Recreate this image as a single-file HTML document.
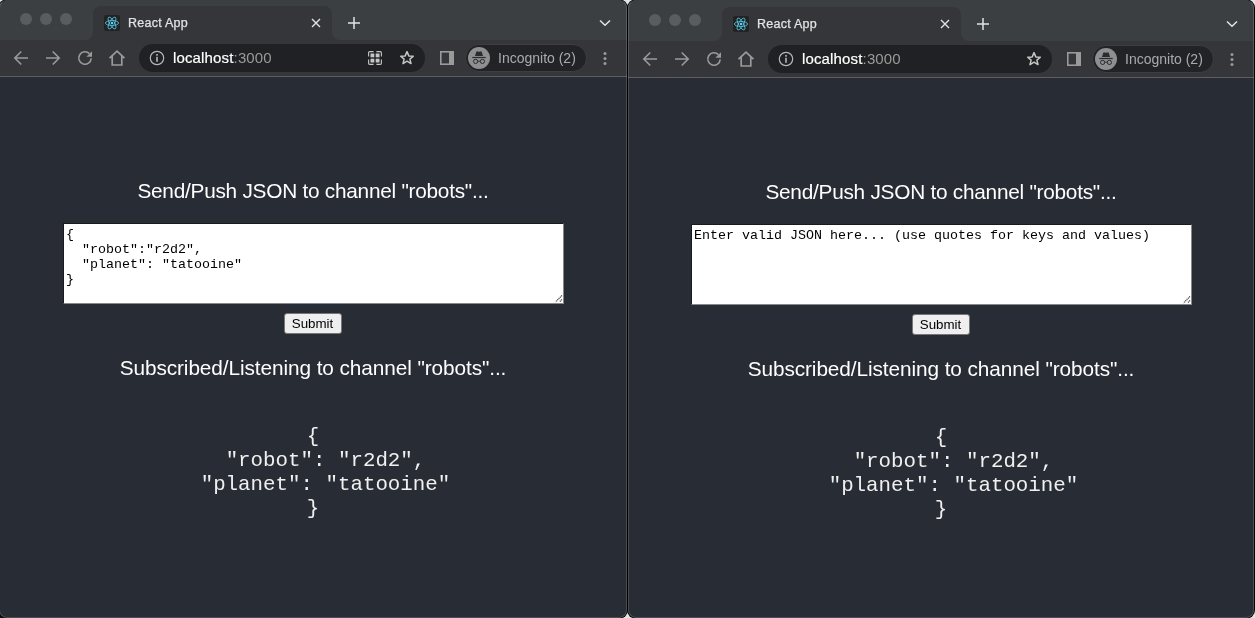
<!DOCTYPE html>
<html><head><meta charset="utf-8"><title>React App</title><style>
*{box-sizing:border-box}
html,body{margin:0;padding:0}
body{width:1255px;height:618px;overflow:hidden;position:relative;background:#e4e4e4;font-family:"Liberation Sans",sans-serif}
.win{position:absolute;overflow:hidden;border-radius:8px;box-shadow:0 0 0 1px #000;background:#35363a;will-change:transform}
.strip{position:absolute;left:0;right:0;background:#3c3f42}
.in{position:absolute;left:0;right:0;bottom:0}
.edge{position:absolute;left:0;top:0;right:0;bottom:0;border-radius:8px;border:1px solid rgba(255,255,255,0.16);border-top-color:transparent;pointer-events:none}
.dot{position:absolute;top:13px;width:12px;height:12px;border-radius:50%;background:#5a5d60}
.tab{position:absolute;top:6px;height:34px;background:#35363a;border-radius:8px 8px 0 0}
.footl,.footr{position:absolute;bottom:0;width:8px;height:8px;overflow:hidden}
.footl{left:-8px}.footr{right:-8px}
.footl:before,.footr:before{content:"";position:absolute;width:16px;height:16px;border-radius:50%;box-shadow:0 0 0 10px #35363a}
.footl:before{left:-8px;top:-8px}.footr:before{left:0;top:-8px}
.ic{position:absolute}
.tabtitle{position:absolute;top:15px;font-size:12.5px;letter-spacing:0.25px;-webkit-text-stroke:0.25px #e3e3e3;line-height:16px;color:#e3e3e3}
.toolbar{position:absolute;left:0;right:0;top:40px;height:36px;background:#35363a}
.sep{position:absolute;left:0;right:0;top:76px;height:1px;background:#5d5e61}
.url{position:absolute;top:44px;height:28px;border-radius:14px;background:#202124}
.host{position:absolute;top:50px;font-size:15px;letter-spacing:0.15px;-webkit-text-stroke:0.2px #fff;line-height:16px;color:#fff}
.host span{color:#9a9a9a;-webkit-text-stroke:0}
.chip{position:absolute;top:44px;width:122px;height:28px;border-radius:14px;background:#222326;border:1px solid #3d3e42}
.inc{position:absolute;top:50px;font-size:14px;line-height:16px;color:#a8abae}
.content{position:absolute;left:0;right:0;top:77px;bottom:0;background:#282c34;color:#fff}
.h1{position:absolute;left:0;right:0;text-align:center;font-size:20.8px;line-height:24px;white-space:nowrap}
.ta{position:absolute;width:501px;height:81px;background:#fff;border:1px solid #1a1a1a;border-right-color:#888;border-bottom-color:#888}
.ta pre{margin:0;padding:3px 0 0 2.5px;font-family:"Liberation Mono",monospace;font-size:13.33px;line-height:15px;color:#000}
.btn{position:absolute;width:58px;height:21px;background:#efefef;border:1px solid #767676;border-radius:3px;color:#000;font-size:13.33px;line-height:19px;text-align:center}
.out{position:absolute;left:0;right:0;margin:0;text-align:center;font-family:"Liberation Mono",monospace;font-size:20.8px;line-height:24px;color:#f0f0f0}
</style></head>
<body>
<div style="position:absolute;left:0;top:606px;width:12px;height:12px;background:#141414"></div>

<div class="win" style="left:-1px;top:0px;width:628px;height:618px">
  <div class="strip" style="top:0;height:40px"></div>
  <div class="in" style="top:0px">
  <div class="dot" style="left:21px"></div><div class="dot" style="left:41px"></div><div class="dot" style="left:61px"></div>
  <div class="tab" style="left:94px;width:239px">
    <div class="footl"></div><div class="footr"></div>
  </div>
  <svg class="ic" style="left:105px;top:15px" width="16" height="16" viewBox="0 0 16 16"><rect width="16" height="16" rx="2" fill="#232323"/><g fill="none" stroke="#55bfe0" stroke-width="0.85"><ellipse cx="8" cy="8" rx="6.6" ry="2.5"/><ellipse cx="8" cy="8" rx="6.6" ry="2.5" transform="rotate(60 8 8)"/><ellipse cx="8" cy="8" rx="6.6" ry="2.5" transform="rotate(120 8 8)"/></g><circle cx="8" cy="8" r="1.3" fill="#5fd3f5"/></svg>
  <div class="tabtitle" style="left:129px">React App</div>
  <svg class="ic" style="left:312px;top:18px" width="10" height="10" viewBox="0 0 10 10"><path d="M1 1L9 9M9 1L1 9" stroke="#e3e3e3" stroke-width="1.4"/></svg>
  <svg class="ic" style="left:348px;top:16px" width="14" height="14" viewBox="0 0 14 14"><path d="M7 1V13M1 7H13" stroke="#e3e3e3" stroke-width="1.5"/></svg>
  <svg class="ic" style="left:600px;top:19px" width="12" height="8" viewBox="0 0 12 8"><path d="M1 1.5L6 6.3L11 1.5" fill="none" stroke="#e3e3e3" stroke-width="1.5"/></svg>
  <div class="toolbar"></div>
  <div class="sep"></div>
  <svg class="ic" style="left:14px;top:50px" width="16" height="16" viewBox="0 0 16 16"><path d="M15 8H2.2M8.3 1.5L1.8 8L8.3 14.5" fill="none" stroke="#9a9a9a" stroke-width="1.6"/></svg>
  <svg class="ic" style="left:46px;top:50px" width="16" height="16" viewBox="0 0 16 16"><path d="M1 8H13.8M7.7 1.5L14.2 8L7.7 14.5" fill="none" stroke="#9a9a9a" stroke-width="1.6"/></svg>
  <svg class="ic" style="left:78px;top:50px" width="16" height="16" viewBox="0 0 16 16"><path d="M14.2 8.4A6.2 6.2 0 1 1 12.4 3.6" fill="none" stroke="#9a9a9a" stroke-width="1.6"/><path d="M15 1.2V6.8H9.4Z" fill="#9a9a9a"/></svg>
  <svg class="ic" style="left:109px;top:49px" width="18" height="18" viewBox="0 0 18 18"><path d="M1.5 9.2L9 2.2L16.5 9.2M4.2 7.2V16H13.8V7.2" fill="none" stroke="#9a9a9a" stroke-width="1.7"/></svg>
  <div class="url" style="left:140px;width:286px"></div>
  <svg class="ic" style="left:150px;top:50px" width="16" height="16" viewBox="0 0 16 16"><circle cx="8" cy="8" r="6.7" fill="none" stroke="#b4b7b9" stroke-width="1.2"/><rect x="7.2" y="6.8" width="1.6" height="5" fill="#b4b7b9"/><rect x="7.2" y="4" width="1.6" height="1.7" fill="#b4b7b9"/></svg>
  <div class="host" style="left:174px">localhost<span>:3000</span></div>
  <svg class="ic" style="left:369px;top:51px" width="14" height="14" viewBox="0 0 14 14"><path d="M0.6 5.6V1.8Q0.6 0.6 1.8 0.6H5.6M8.4 0.6H12.2Q13.4 0.6 13.4 1.8V5.6M13.4 8.4V12.2Q13.4 13.4 12.2 13.4H8.4M5.6 13.4H1.8Q0.6 13.4 0.6 12.2V8.4" fill="none" stroke="#c4c7c5" stroke-width="1.1"/><rect x="2.5" y="2.5" width="3.8" height="3.8" fill="#c4c7c5"/><rect x="7.7" y="2.5" width="3.8" height="3.8" fill="#c4c7c5"/><rect x="2.5" y="7.7" width="3.8" height="3.8" fill="#c4c7c5"/><rect x="7.7" y="7.7" width="3.8" height="3.8" fill="#c4c7c5"/></svg>
  <svg class="ic" style="left:400px;top:50px" width="16" height="16" viewBox="0 0 16 16"><path d="M8 1.6L9.8 5.9L14.3 6.2L10.9 9.1L12 13.6L8 11.2L4 13.6L5.1 9.1L1.7 6.2L6.2 5.9Z" fill="none" stroke="#c4c7c5" stroke-width="1.5" stroke-linejoin="round"/></svg>
  <svg class="ic" style="left:441px;top:51px" width="14" height="14" viewBox="0 0 14 14"><rect x="0" y="0" width="14" height="14" fill="#9a9a9a"/><rect x="1.6" y="1.6" width="7.4" height="10.8" fill="#35363a"/></svg>
  <div class="chip" style="left:466px"></div>
  <svg class="ic" style="left:469px;top:47px" width="22" height="22" viewBox="0 0 22 22"><circle cx="11" cy="11" r="11" fill="#8e8f91"/><path d="M7 9L8.2 4.9Q8.6 4.2 9.5 4.4L11 4.8L12.5 4.4Q13.4 4.2 13.8 4.9L15 9Z" fill="#2b2c2f"/><rect x="4.3" y="9.9" width="13.4" height="1.2" fill="#2b2c2f"/><circle cx="7.6" cy="14.4" r="2.1" fill="none" stroke="#2b2c2f" stroke-width="1"/><circle cx="14.4" cy="14.4" r="2.1" fill="none" stroke="#2b2c2f" stroke-width="1"/><path d="M9.7 14.2H12.3" stroke="#2b2c2f" stroke-width="0.9"/></svg>
  <div class="inc" style="left:499px">Incognito (2)</div>
  <svg class="ic" style="left:604px;top:51px" width="4" height="15" viewBox="0 0 4 15"><circle cx="2" cy="2.5" r="1.5" fill="#9a9a9a"/><circle cx="2" cy="7.5" r="1.5" fill="#9a9a9a"/><circle cx="2" cy="12.5" r="1.5" fill="#9a9a9a"/></svg>
  <div class="content">
    <div class="h1" style="top:102px;letter-spacing:-0.25px">Send/Push JSON to channel "robots"...</div>
    <div class="ta" style="left:63.5px;top:146px"><pre>{
  "robot":"r2d2",
  "planet": "tatooine"
}</pre><svg style="position:absolute;right:0px;bottom:0px" width="9" height="9" viewBox="0 0 9 9"><path d="M8 1.5L1.5 8M8 5.5L5.5 8" stroke="#444" stroke-width="1.3" stroke-dasharray="1.1 0.7"/></svg></div>
    <div class="btn" style="left:284.5px;top:236px">Submit</div>
    <div class="h1" style="top:279px;letter-spacing:-0.09px">Subscribed/Listening to channel "robots"...</div>
    <pre class="out" style="top:348px">{
  "robot": "r2d2",
  "planet": "tatooine"
}</pre>
  </div>
  </div>
  <div class="edge"></div>
</div>

<div class="win" style="left:628px;top:0px;width:626px;height:618px">
  <div class="strip" style="top:0;height:41px"></div>
  <div class="in" style="top:1px">
  <div class="dot" style="left:21px"></div><div class="dot" style="left:41px"></div><div class="dot" style="left:61px"></div>
  <div class="tab" style="left:94px;width:239px">
    <div class="footl"></div><div class="footr"></div>
  </div>
  <svg class="ic" style="left:105px;top:15px" width="16" height="16" viewBox="0 0 16 16"><rect width="16" height="16" rx="2" fill="#232323"/><g fill="none" stroke="#55bfe0" stroke-width="0.85"><ellipse cx="8" cy="8" rx="6.6" ry="2.5"/><ellipse cx="8" cy="8" rx="6.6" ry="2.5" transform="rotate(60 8 8)"/><ellipse cx="8" cy="8" rx="6.6" ry="2.5" transform="rotate(120 8 8)"/></g><circle cx="8" cy="8" r="1.3" fill="#5fd3f5"/></svg>
  <div class="tabtitle" style="left:129px">React App</div>
  <svg class="ic" style="left:312px;top:18px" width="10" height="10" viewBox="0 0 10 10"><path d="M1 1L9 9M9 1L1 9" stroke="#e3e3e3" stroke-width="1.4"/></svg>
  <svg class="ic" style="left:348px;top:16px" width="14" height="14" viewBox="0 0 14 14"><path d="M7 1V13M1 7H13" stroke="#e3e3e3" stroke-width="1.5"/></svg>
  <svg class="ic" style="left:598px;top:19px" width="12" height="8" viewBox="0 0 12 8"><path d="M1 1.5L6 6.3L11 1.5" fill="none" stroke="#e3e3e3" stroke-width="1.5"/></svg>
  <div class="toolbar"></div>
  <div class="sep"></div>
  <svg class="ic" style="left:14px;top:50px" width="16" height="16" viewBox="0 0 16 16"><path d="M15 8H2.2M8.3 1.5L1.8 8L8.3 14.5" fill="none" stroke="#9a9a9a" stroke-width="1.6"/></svg>
  <svg class="ic" style="left:46px;top:50px" width="16" height="16" viewBox="0 0 16 16"><path d="M1 8H13.8M7.7 1.5L14.2 8L7.7 14.5" fill="none" stroke="#9a9a9a" stroke-width="1.6"/></svg>
  <svg class="ic" style="left:78px;top:50px" width="16" height="16" viewBox="0 0 16 16"><path d="M14.2 8.4A6.2 6.2 0 1 1 12.4 3.6" fill="none" stroke="#9a9a9a" stroke-width="1.6"/><path d="M15 1.2V6.8H9.4Z" fill="#9a9a9a"/></svg>
  <svg class="ic" style="left:109px;top:49px" width="18" height="18" viewBox="0 0 18 18"><path d="M1.5 9.2L9 2.2L16.5 9.2M4.2 7.2V16H13.8V7.2" fill="none" stroke="#9a9a9a" stroke-width="1.7"/></svg>
  <div class="url" style="left:140px;width:284px"></div>
  <svg class="ic" style="left:150px;top:50px" width="16" height="16" viewBox="0 0 16 16"><circle cx="8" cy="8" r="6.7" fill="none" stroke="#b4b7b9" stroke-width="1.2"/><rect x="7.2" y="6.8" width="1.6" height="5" fill="#b4b7b9"/><rect x="7.2" y="4" width="1.6" height="1.7" fill="#b4b7b9"/></svg>
  <div class="host" style="left:174px">localhost<span>:3000</span></div>
  
  <svg class="ic" style="left:398px;top:50px" width="16" height="16" viewBox="0 0 16 16"><path d="M8 1.6L9.8 5.9L14.3 6.2L10.9 9.1L12 13.6L8 11.2L4 13.6L5.1 9.1L1.7 6.2L6.2 5.9Z" fill="none" stroke="#c4c7c5" stroke-width="1.5" stroke-linejoin="round"/></svg>
  <svg class="ic" style="left:439px;top:51px" width="14" height="14" viewBox="0 0 14 14"><rect x="0" y="0" width="14" height="14" fill="#9a9a9a"/><rect x="1.6" y="1.6" width="7.4" height="10.8" fill="#35363a"/></svg>
  <div class="chip" style="left:464px"></div>
  <svg class="ic" style="left:467px;top:47px" width="22" height="22" viewBox="0 0 22 22"><circle cx="11" cy="11" r="11" fill="#8e8f91"/><path d="M7 9L8.2 4.9Q8.6 4.2 9.5 4.4L11 4.8L12.5 4.4Q13.4 4.2 13.8 4.9L15 9Z" fill="#2b2c2f"/><rect x="4.3" y="9.9" width="13.4" height="1.2" fill="#2b2c2f"/><circle cx="7.6" cy="14.4" r="2.1" fill="none" stroke="#2b2c2f" stroke-width="1"/><circle cx="14.4" cy="14.4" r="2.1" fill="none" stroke="#2b2c2f" stroke-width="1"/><path d="M9.7 14.2H12.3" stroke="#2b2c2f" stroke-width="0.9"/></svg>
  <div class="inc" style="left:497px">Incognito (2)</div>
  <svg class="ic" style="left:602px;top:51px" width="4" height="15" viewBox="0 0 4 15"><circle cx="2" cy="2.5" r="1.5" fill="#9a9a9a"/><circle cx="2" cy="7.5" r="1.5" fill="#9a9a9a"/><circle cx="2" cy="12.5" r="1.5" fill="#9a9a9a"/></svg>
  <div class="content">
    <div class="h1" style="top:102px;letter-spacing:-0.25px">Send/Push JSON to channel "robots"...</div>
    <div class="ta" style="left:62.5px;top:146px"><pre>Enter valid JSON here... (use quotes for keys and values)</pre><svg style="position:absolute;right:0px;bottom:0px" width="9" height="9" viewBox="0 0 9 9"><path d="M8 1.5L1.5 8M8 5.5L5.5 8" stroke="#444" stroke-width="1.3" stroke-dasharray="1.1 0.7"/></svg></div>
    <div class="btn" style="left:283.5px;top:236px">Submit</div>
    <div class="h1" style="top:279px;letter-spacing:-0.09px">Subscribed/Listening to channel "robots"...</div>
    <pre class="out" style="top:348px">{
  "robot": "r2d2",
  "planet": "tatooine"
}</pre>
  </div>
  </div>
  <div class="edge"></div>
</div>

</body></html>
